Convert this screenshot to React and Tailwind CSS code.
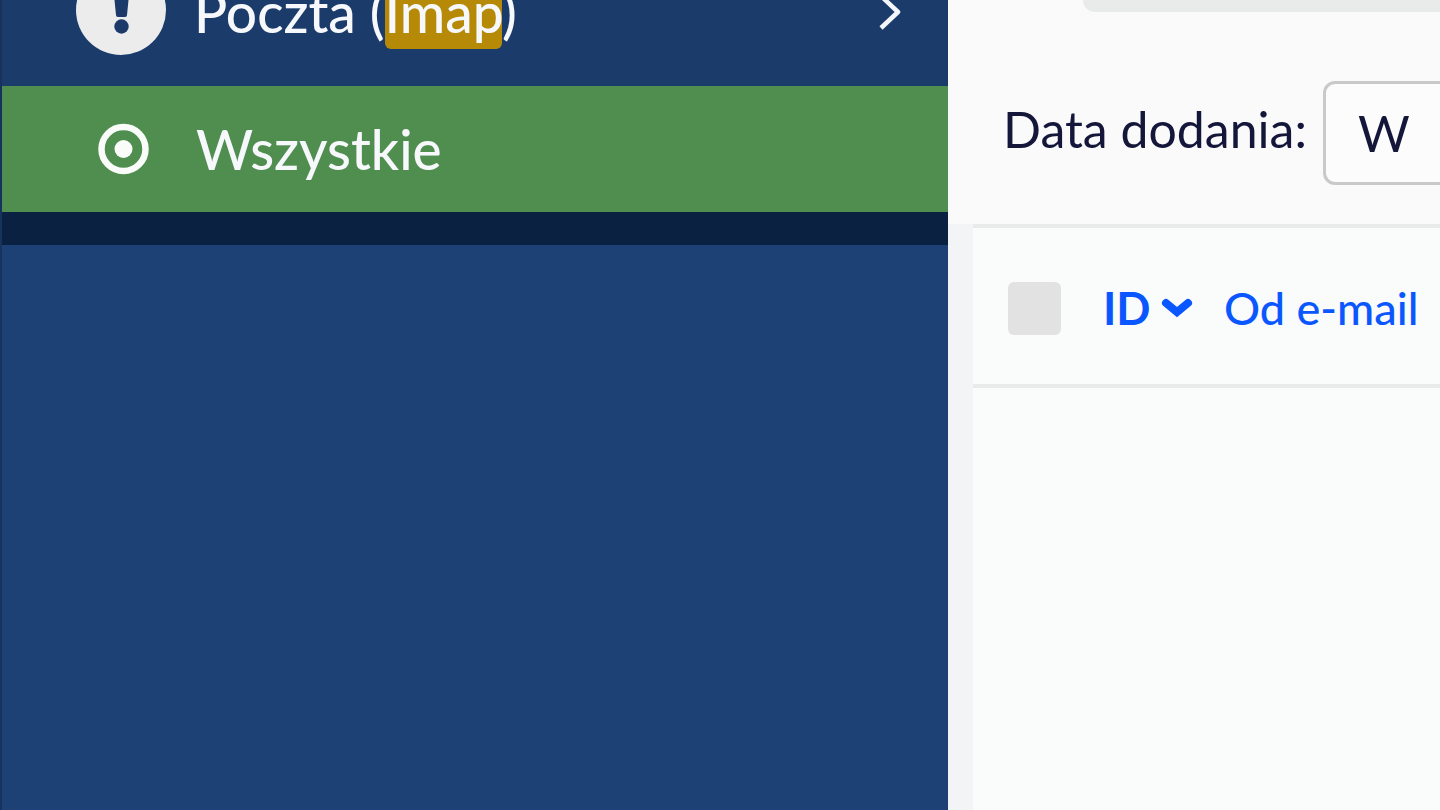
import { useState } from "react";

const menuItems = [{ id: "all", label: "Wszystkie" }];

const AlertIcon = () => (
    <svg viewBox="0 0 90 90" className="size-[90px] shrink-0" aria-hidden="true">
        <circle cx="45" cy="45" r="45" fill="#ececec" />
        <path d="M37 20 H54 L51 50 Q51 52 49 52 H42 Q40 52 40 50 Z" fill="#1b3a69" />
        <circle cx="45.5" cy="61.500" r="7.2" fill="#1b3a69" />
    </svg>
);

const DotCircleIcon = () => (
    <svg viewBox="0 0 52 52" className="size-[52px] shrink-0" aria-hidden="true">
        <circle cx="25.500" cy="26" r="22" fill="none" stroke="#fafcfa" strokeWidth="6.5" />
        <circle cx="25.500" cy="26" r="9" fill="#fafcfa" />
    </svg>
);

const ChevronRightIcon = () => (
    <svg viewBox="0 0 24 36" className="h-9 w-6 shrink-0" aria-hidden="true">
        <path d="M3 2 L20 18 L3 34" fill="none" stroke="#f4f6fa" strokeWidth="4.5" strokeLinejoin="round" />
    </svg>
);

const SortDownIcon = () => (
    <svg viewBox="0 0 32 22" className="h-[22px] w-8 shrink-0" aria-hidden="true">
        <path d="M5 6 L16 15 L27 6" fill="none" stroke="#0b57ff" strokeWidth="8" strokeLinecap="round" />
    </svg>
);

const Sidebar = ({ active, onSelect }) => (
    <nav className="min-w-0 border-l-2 border-[#17325c] bg-[#1e4175] text-[55px] leading-[64px] font-medium text-[#f6f8fb]">
        {/* Parent item, scrolled partly out of view */}
        <a href="#imap" className="-mt-[66px] flex h-[152px] items-center bg-[#1b3c6b] pr-[46px] pl-[74px]">
            <AlertIcon />
            <span className="ml-7 pt-1">
                Poczta (<mark className="rounded-md bg-[#b68a06] pb-1 text-inherit">Imap</mark>)
            </span>
            <span className="ml-auto pt-1">
                <ChevronRightIcon />
            </span>
        </a>

        {menuItems.map((item) => (
            <button
                key={item.id}
                onClick={() => onSelect(item.id)}
                className={`flex h-[126px] w-full items-center gap-[46px] pl-24 text-left ${
                    active === item.id ? "bg-[#508e50]" : ""
                }`}
            >
                <DotCircleIcon />
                <span>{item.label}</span>
            </button>
        ))}
        <div className="h-[33px] bg-[#0b2141]" />
    </nav>
);

const App = () => {
    const [active, setActive] = useState("all");
    const [date, setDate] = useState("W");
    const [checked, setChecked] = useState(false);

    return (
        <div className="grid min-h-screen grid-cols-[948fr_492fr] overflow-hidden bg-[#fafafa] font-['Lato',sans-serif]">
            <Sidebar active={active} onSelect={setActive} />

            <main className="flex min-w-0 flex-col overflow-hidden">
                <div className="ml-[135px] h-3 rounded-bl-xl bg-[#e9eaea]" />

                {/* Filters */}
                <div className="flex items-center pt-[69px] pb-[39px] pl-[55px]">
                    <label htmlFor="date-added" className="w-[320px] shrink-0 pb-2 text-[50px] leading-[60px] whitespace-nowrap text-[#14163a]">
                        Data dodania:
                    </label>
                    <input
                        id="date-added"
                        value={date}
                        onChange={(e) => setDate(e.target.value)}
                        className="h-[104px] w-[400px] shrink-0 rounded-xl border-3 border-[#c9c9c9] bg-[#fcfcfc] px-8 text-[50px] text-[#14163a] outline-none"
                    />
                </div>

                <div className="flex-1 border-l-[25px] border-[#f3f4f5] bg-[#fafbfb]">
                    <table className="w-full border-separate border-spacing-0 border-y-4 border-[#e9ebeb] text-[45px] leading-[56px] text-[#0b57ff]">
                        <thead>
                            <tr className="h-[156px]">
                                <th className="w-[130px] pt-1 pl-[35px] text-left">
                                    <input
                                        type="checkbox"
                                        aria-label="Zaznacz wszystkie"
                                        checked={checked}
                                        onChange={() => setChecked(!checked)}
                                        className="block size-[53px] appearance-none rounded-md bg-[#e2e2e2] checked:bg-[#0b57ff]"
                                    />
                                </th>
                                <th className="w-[121px] pt-1 text-left font-bold">
                                    <button className="flex items-center gap-2.5">
                                        ID
                                        <SortDownIcon />
                                    </button>
                                </th>
                                <th className="pt-1 text-left font-medium whitespace-nowrap">
                                    <button>Od e-mail</button>
                                </th>
                            </tr>
                        </thead>
                    </table>
                </div>
            </main>
        </div>
    );
};

export default App;
